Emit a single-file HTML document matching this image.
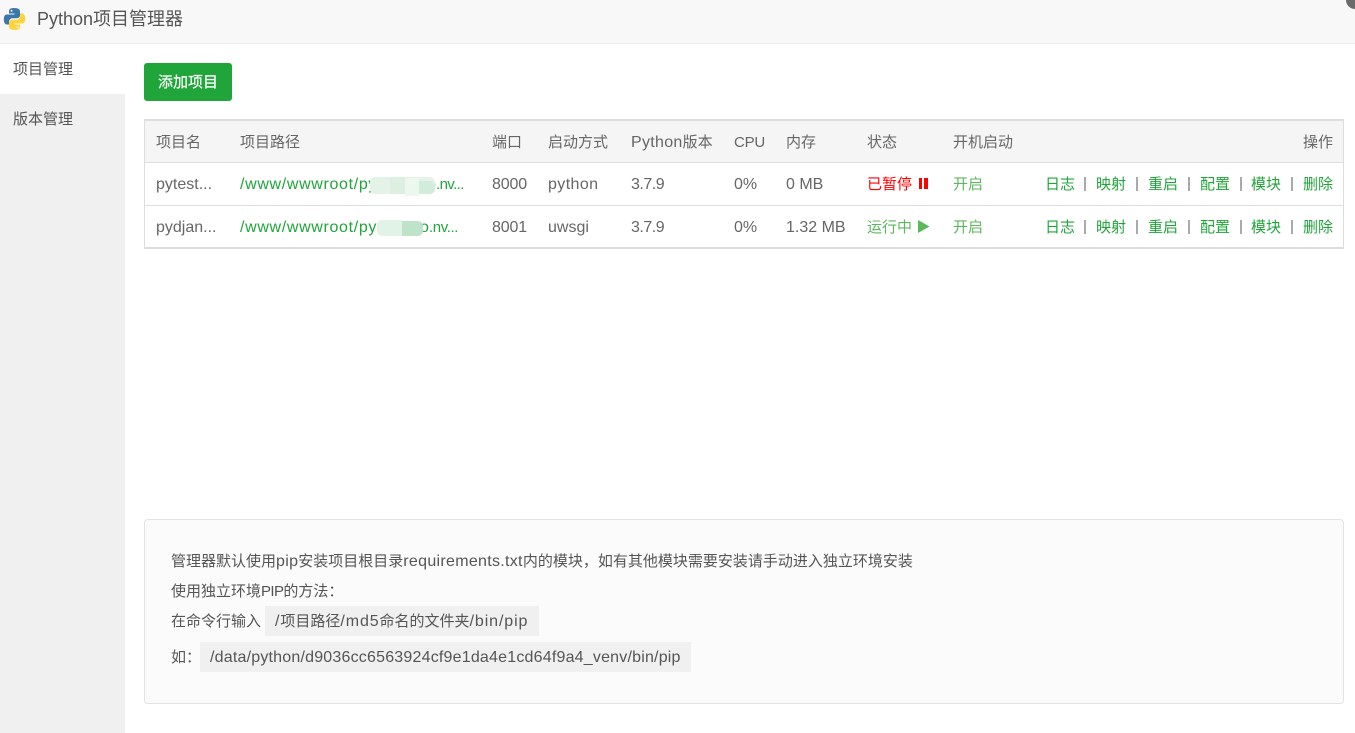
<!DOCTYPE html>
<html>
<head>
<meta charset="utf-8">
<style>
html,body{margin:0;padding:0;background:#fff;}
body{width:1355px;height:733px;overflow:hidden;position:relative;font-family:"Liberation Sans","Noto Sans CJK SC",sans-serif;font-size:15px;color:#666;}
.a{position:absolute;white-space:nowrap;line-height:20px;}
.n{font-size:16px;}
.g{color:#20a53a;}
.h{color:#666;}
.s{color:#5cb85c;}
.sep{position:absolute;width:2px;height:14px;background:#aaa;}
.l{font-size:16px;letter-spacing:.3px;}
.c{font-size:16px;letter-spacing:.9px;}
.p{position:absolute;}
</style>
</head>
<body>
<!-- title bar -->
<div style="position:absolute;left:0;top:0;width:1355px;height:43px;background:#f8f8f8;border-bottom:1px solid #eee;"></div>
<svg style="position:absolute;left:3px;top:7px" width="23" height="24" viewBox="0 0 23 24">
<path d="M11 1C6.500 1 6 2.800 6 4.200V6.500h5.500v1H3.800C1.800 7.500.8 9.500.8 12.200S1.800 17.500 3.800 17.500H6v-2.800c0-2 1.600-3.500 3.500-3.500h4.500c1.700 0 3-1.400 3-3V4.200C17 2.400 15.200 1 11 1z" fill="#3b77a8"/>
<circle cx="8.500" cy="3.800" r="1" fill="#f4f4f4"/>
<path d="M12 23c4.500 0 5-1.800 5-3.200v-2.300h-5.500v-1h7.700c2 0 3-2 3-4.700s-1-5.300-3-5.300H17v2.800c0 2-1.600 3.500-3.500 3.500H9c-1.700 0-3 1.400-3 3v4C6 21.600 7.800 23 12 23z" fill="#ffd43b"/>
<circle cx="14.500" cy="20.200" r="1" fill="#f4f4f4"/>
</svg>
<div class="a" style="left:37px;top:9px;font-size:18px;color:#555;">Python项目管理器</div>
<div style="position:absolute;left:1346px;top:-9px;width:18px;height:18px;border-radius:50%;background:#6b6b6b;"></div>

<!-- sidebar -->
<div style="position:absolute;left:0;top:94px;width:125px;height:639px;background:#f0f0f0;"></div>
<div class="a" style="left:13px;top:60px;color:#555;">项目管理</div>
<div class="a" style="left:13px;top:110px;color:#555;">版本管理</div>

<!-- add button -->
<div style="position:absolute;left:144px;top:63px;width:88px;height:38px;background:#20a53a;border-radius:3px;color:#fff;text-align:center;line-height:40px;-webkit-text-stroke:.2px #fff;">添加项目</div>

<!-- table -->
<div style="position:absolute;left:144px;top:119px;width:1198px;height:126px;border:1px solid #ddd;border-top:2px solid #ddd;border-bottom:2px solid #ddd;"></div>
<div style="position:absolute;left:145px;top:121px;width:1198px;height:41px;background:#f5f5f5;"></div>
<div style="position:absolute;left:145px;top:162px;width:1198px;height:1px;background:#ddd;"></div>
<div style="position:absolute;left:145px;top:205px;width:1198px;height:1px;background:#ddd;"></div>

<div class="a h" style="left:156px;top:133px;">项目名</div>
<div class="a h" style="left:240px;top:133px;">项目路径</div>
<div class="a h" style="left:492px;top:133px;">端口</div>
<div class="a h" style="left:548px;top:133px;">启动方式</div>
<div class="a h" style="left:631px;top:133px;"><span style="font-size:16px;letter-spacing:.3px">Python</span>版本</div>
<div class="a h" style="left:734px;top:133px;letter-spacing:-.2px;">CPU</div>
<div class="a h" style="left:786px;top:133px;">内存</div>
<div class="a h" style="left:867px;top:133px;">状态</div>
<div class="a h" style="left:953px;top:133px;">开机启动</div>
<div class="a h" style="left:1303px;top:133px;">操作</div>

<!-- row 1 -->
<div class="a h n" style="left:156px;top:175px;">pytest...</div>
<div class="a g n" style="left:240px;top:175px;letter-spacing:.66px;">/www/wwwroot/py</div>
<div class="a g n" style="left:427px;top:175px;">o</div>
<div class="a g" style="left:436px;top:175px;letter-spacing:-.6px;">.nv...</div>
<div class="p" style="left:370px;top:177px;width:65px;height:17px;background:#e4f3e7;border-radius:5px;"></div>
<div class="p" style="left:390px;top:177px;width:15px;height:17px;background:#dcefe1;"></div>
<div class="p" style="left:405px;top:178px;width:14px;height:18px;background:#ecf7ef;"></div>
<div class="p" style="left:419px;top:181px;width:16px;height:13px;background:#d3ebd9;border-radius:0 5px 5px 0;"></div>
<div class="a h n" style="left:492px;top:175px;letter-spacing:-.15px;">8000</div>
<div class="a h n" style="left:548px;top:175px;letter-spacing:.4px;">python</div>
<div class="a h n" style="left:631px;top:175px;letter-spacing:-.5px;">3.7.9</div>
<div class="a h n" style="left:734px;top:175px;">0%</div>
<div class="a h n" style="left:786px;top:175px;">0 MB</div>
<div class="a" style="left:867px;top:175px;color:#f00;">已暂停</div>
<div style="position:absolute;left:919px;top:178px;width:3px;height:11px;background:#f00;"></div>
<div style="position:absolute;left:924px;top:178px;width:4px;height:11px;background:#f00;"></div>
<div class="a s" style="left:953px;top:175px;">开启</div>

<!-- row 2 -->
<div class="a h n" style="left:156px;top:218px;">pydjan...</div>
<div class="a g n" style="left:240px;top:218px;letter-spacing:.66px;">/www/wwwroot/py</div>
<div class="a g n" style="left:420px;top:218px;">o</div>
<div class="a g" style="left:429px;top:218px;letter-spacing:-.4px;">.nv...</div>
<div class="p" style="left:377px;top:220px;width:25px;height:16px;background:#e2f2e6;border-radius:5px 0 0 5px;"></div>
<div class="p" style="left:402px;top:221px;width:21px;height:15px;background:#bfe3c8;border-radius:0 5px 5px 0;"></div>
<div class="a h n" style="left:492px;top:218px;letter-spacing:-.15px;">8001</div>
<div class="a h n" style="left:548px;top:218px;">uwsgi</div>
<div class="a h n" style="left:631px;top:218px;letter-spacing:-.5px;">3.7.9</div>
<div class="a h n" style="left:734px;top:218px;">0%</div>
<div class="a h n" style="left:786px;top:218px;">1.32 MB</div>
<div class="a s" style="left:867px;top:218px;">运行中</div>
<svg style="position:absolute;left:918px;top:220px" width="12" height="13" viewBox="0 0 12 13"><path d="M0 0L11.500 6.500L0 13z" fill="#5cb85c"/></svg>
<div class="a s" style="left:953px;top:218px;">开启</div>

<!-- ops -->
<div class="a g" style="left:1045px;top:175px;">日志</div>
<div class="a g" style="left:1096px;top:175px;">映射</div>
<div class="a g" style="left:1148px;top:175px;">重启</div>
<div class="a g" style="left:1200px;top:175px;">配置</div>
<div class="a g" style="left:1251px;top:175px;">模块</div>
<div class="a g" style="left:1303px;top:175px;">删除</div>
<div class="sep" style="left:1084px;top:177px;"></div>
<div class="sep" style="left:1136px;top:177px;"></div>
<div class="sep" style="left:1188px;top:177px;"></div>
<div class="sep" style="left:1240px;top:177px;"></div>
<div class="sep" style="left:1291px;top:177px;"></div>
<div class="a g" style="left:1045px;top:218px;">日志</div>
<div class="a g" style="left:1096px;top:218px;">映射</div>
<div class="a g" style="left:1148px;top:218px;">重启</div>
<div class="a g" style="left:1200px;top:218px;">配置</div>
<div class="a g" style="left:1251px;top:218px;">模块</div>
<div class="a g" style="left:1303px;top:218px;">删除</div>
<div class="sep" style="left:1084px;top:220px;"></div>
<div class="sep" style="left:1136px;top:220px;"></div>
<div class="sep" style="left:1188px;top:220px;"></div>
<div class="sep" style="left:1240px;top:220px;"></div>
<div class="sep" style="left:1291px;top:220px;"></div>

<!-- notes -->
<div style="position:absolute;left:144px;top:519px;width:1198px;height:183px;background:#fbfbfb;border:1px solid #e3e3e3;border-radius:4px;"></div>
<div class="a" style="left:171px;top:552px;color:#555;">管理器默认使用<span class="l">pip</span>安装项目根目录<span class="l">requirements.txt</span>内的模块，如有其他模块需要安装请手动进入独立环境安装</div>
<div class="a" style="left:171px;top:582px;color:#555;">使用独立环境<span style="letter-spacing:-.6px">PIP</span>的方法：</div>
<div class="a" style="left:171px;top:612px;color:#555;">在命令行输入</div>
<div class="a" style="left:265px;top:606px;width:274px;height:30px;line-height:32px;background:#f0f0f0;color:#555;text-indent:10px;"><span class="c">/</span>项目路径<span class="c">/md5</span>命名的文件夹<span class="c">/bin/pip</span></div>
<div class="a" style="left:171px;top:648px;color:#555;">如：</div>
<div class="a" style="left:200px;top:642px;width:491px;height:30px;line-height:32px;background:#f0f0f0;color:#555;text-indent:10px;font-size:16px;letter-spacing:.2px;">/data/python/d9036cc6563924cf9e1da4e1cd64f9a4_venv/bin/pip</div>
</body>
</html>
